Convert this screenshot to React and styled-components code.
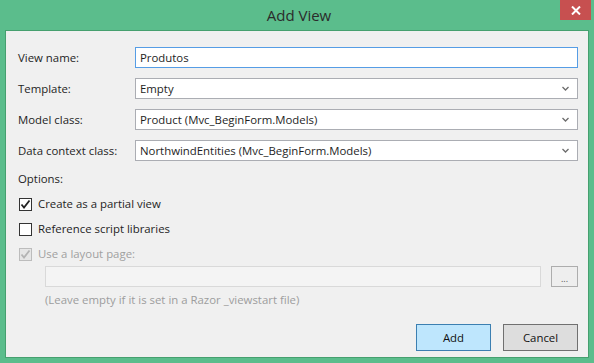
import React from "react";
import styled, { createGlobalStyle } from "styled-components";

// Add View dialog (Visual Studio / Windows 8 look)

const GlobalStyle = createGlobalStyle`
  html, body {
    margin: 0;
    padding: 0;
    background: #5bbd8c;
  }
  body {
    font-family: "Segoe UI", "Open Sans", "Noto Sans", sans-serif;
    font-size: 11.4px;
    color: #1e1e1e;
  }
`;

const Window = styled.div`
  width: 594px;
  height: 363px;
  box-sizing: border-box;
  background: #5bbd8c;
  display: flex;
  flex-direction: column;
  padding: 0 5px 5px 5px;
`;

const TitleBar = styled.div`
  height: 30px;
  flex-shrink: 0;
  display: grid;
  grid-template-columns: 1fr auto 1fr;
  align-items: start;
  margin: 0 -2px 0 0;
`;

const Title = styled.div`
  grid-column: 2;
  font-size: 15px;
  line-height: 30px;
  color: #2b2b2b;
  padding-left: 2px;
`;

const CloseBtn = styled.div`
  grid-column: 3;
  justify-self: end;
  width: 31px;
  height: 20px;
  background: #c75050;
  display: flex;
  align-items: center;
  justify-content: center;
`;

const Client = styled.div`
  flex: 1;
  background: #f0f0f0;
  border: 1px solid #46a06f;
  padding: 16px 10px 0 12px;
  display: flex;
  flex-direction: column;
`;

const Form = styled.div`
  display: grid;
  grid-template-columns: 117px 1fr;
  row-gap: 10px;
  align-items: center;
`;

const Label = styled.div`
  line-height: 21px;
`;

const Field = styled.div`
  height: 21px;
  box-sizing: border-box;
  border: 1px solid ${(p) => (p.$focused ? "#569de5" : "#abadb3")};
  background: #fff;
  display: flex;
  align-items: center;
  padding: 0 8px 0 4px;
  line-height: 19px;
`;

const FieldText = styled.span`
  flex: 1;
  white-space: nowrap;
  overflow: hidden;
`;

const Options = styled.div`
  margin-top: 10px;
  line-height: 16px;
`;

const CheckList = styled.div`
  display: flex;
  flex-direction: column;
  gap: 9px;
  margin-top: 9px;
`;

const CheckRow = styled.div`
  display: flex;
  align-items: center;
  gap: 6px;
  padding-left: 1px;
  line-height: 16px;
  color: ${(p) => (p.$disabled ? "#a0a0a0" : "#1e1e1e")};
`;

const Box = styled.div`
  width: 13px;
  height: 13px;
  box-sizing: border-box;
  border: 1px solid ${(p) => (p.$disabled ? "#bcbcbc" : "#333")};
  background: ${(p) => (p.$disabled ? "#e6e6e6" : "#fff")};
  display: flex;
  align-items: center;
  justify-content: center;
`;

const LayoutRow = styled.div`
  display: flex;
  gap: 10px;
  margin: 4px 0 0 27px;
`;

const LayoutInput = styled.div`
  flex: 1;
  height: 21px;
  box-sizing: border-box;
  border: 1px solid #d9d9d9;
  background: #f4f4f4;
`;

const SmallBtn = styled.div`
  width: 27px;
  height: 21px;
  box-sizing: border-box;
  border: 1px solid #adadad;
  background: #eeeeee;
  display: flex;
  align-items: flex-end;
  justify-content: center;
  font-size: 9px;
  line-height: 14px;
  color: #555;
`;

const Hint = styled.div`
  margin: 5px 0 0 27px;
  color: #9d9d9d;
  line-height: 16px;
`;

const Footer = styled.div`
  display: flex;
  justify-content: flex-end;
  gap: 12px;
  margin-top: 16px;
`;

const Button = styled.div`
  width: 75px;
  height: 27px;
  box-sizing: border-box;
  border: 1px solid ${(p) => (p.$primary ? "#3c7fb1" : "#707070")};
  background: ${(p) => (p.$primary ? "#bee6fd" : "#dddddd")};
  display: flex;
  align-items: center;
  justify-content: center;
  color: #111;
`;

const Chevron = () => (
  <svg width="7" height="5" viewBox="0 0 7 5">
    <path d="M0.5 1 L3.5 4 L6.5 1" fill="none" stroke="#6d6d6d" strokeWidth="1.3" />
  </svg>
);

const Check = ({ color }) => (
  <svg width="11" height="11" viewBox="0 0 11 11">
    <path d="M1.5 5.5 L4 8.5 L9.5 1.5" fill="none" stroke={color} strokeWidth="1.8" />
  </svg>
);

function Select({ value }) {
  return (
    <Field>
      <FieldText>{value}</FieldText>
      <Chevron />
    </Field>
  );
}

function CheckItem({ label, checked, disabled }) {
  return (
    <CheckRow $disabled={disabled}>
      <Box $disabled={disabled}>
        {checked && <Check color={disabled ? "#b4b4b4" : "#222"} />}
      </Box>
      {label}
    </CheckRow>
  );
}

export default function App() {
  return (
    <>
      <GlobalStyle />
      <Window>
        <TitleBar>
          <Title>Add View</Title>
          <CloseBtn>
            <svg width="10" height="9" viewBox="0 0 10 9">
              <path d="M1 0.5 L9 8.5 M9 0.5 L1 8.5" stroke="#fff" strokeWidth="2" />
            </svg>
          </CloseBtn>
        </TitleBar>
        <Client>
          <Form>
            <Label>View name:</Label>
            <Field $focused>
              <FieldText>Produtos</FieldText>
            </Field>
            <Label>Template:</Label>
            <Select value="Empty" />
            <Label>Model class:</Label>
            <Select value="Product (Mvc_BeginForm.Models)" />
            <Label>Data context class:</Label>
            <Select value="NorthwindEntities (Mvc_BeginForm.Models)" />
          </Form>
          <Options>Options:</Options>
          <CheckList>
            <CheckItem label="Create as a partial view" checked />
            <CheckItem label="Reference script libraries" />
            <CheckItem label="Use a layout page:" checked disabled />
          </CheckList>
          <LayoutRow>
            <LayoutInput />
            <SmallBtn>...</SmallBtn>
          </LayoutRow>
          <Hint>(Leave empty if it is set in a Razor _viewstart file)</Hint>
          <Footer>
            <Button $primary>Add</Button>
            <Button>Cancel</Button>
          </Footer>
        </Client>
      </Window>
    </>
  );
}
